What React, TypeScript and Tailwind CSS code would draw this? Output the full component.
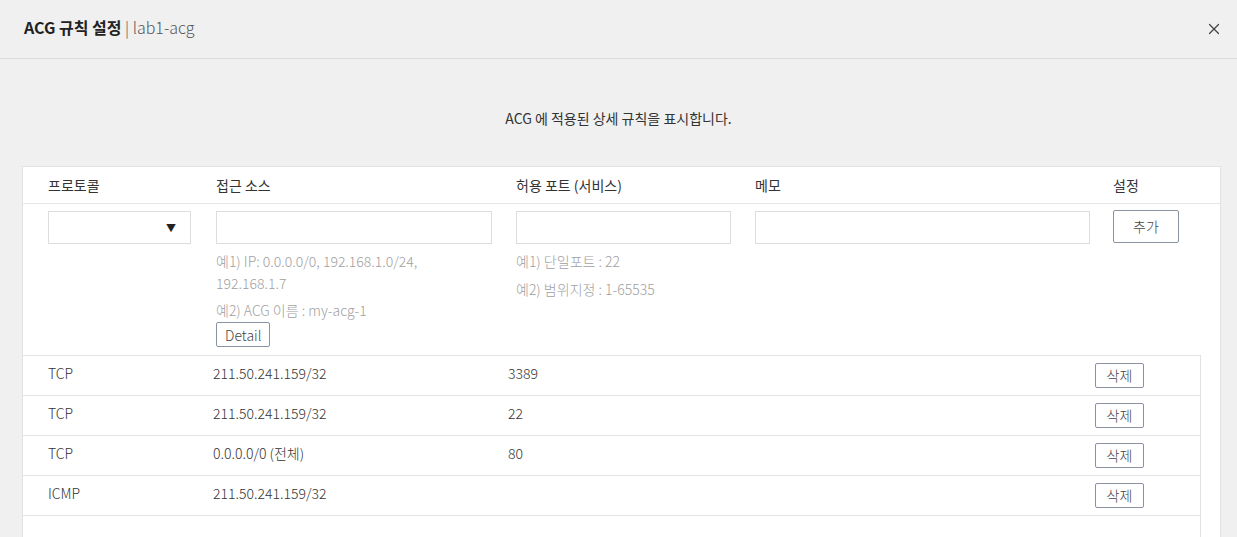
import { X } from 'lucide-react';

const rules = [
  { protocol: 'TCP', source: '211.50.241.159/32', port: '3389' },
  { protocol: 'TCP', source: '211.50.241.159/32', port: '22' },
  { protocol: 'TCP', source: '0.0.0.0/0 (전체)', port: '80' },
  { protocol: 'ICMP', source: '211.50.241.159/32', port: '' },
];

export default function App() {
  return (
    <div
      className="h-[537px] overflow-hidden bg-[#f0f0f0] text-[14px] text-[#333] font-light"
      style={{ fontFamily: '"Noto Sans CJK KR", "Noto Sans", sans-serif' }}
    >
      {/* Header */}
      <header className="h-[59px] pl-6 pr-[14px] flex items-center justify-between border-b border-[#dcdcdc]">
        <h1 className="text-[16px] -mt-[4px]">
          <span className="font-semibold text-[#222]">ACG 규칙 설정</span>
          <span className="text-[#555]"> | lab1-acg</span>
        </h1>
        <button className="text-[#444]">
          <X size={18} strokeWidth={1.6} />
        </button>
      </header>

      <p className="text-center mt-[49px] mb-[38px] leading-[20px] font-normal">
        ACG 에 적용된 상세 규칙을 표시합니다.
      </p>

      {/* Card */}
      <div className="mx-[22px] mr-[16px] bg-white border border-[#e2e2e2] pr-[19px]">
        <div className="-mr-[19px] grid grid-cols-[168px_300px_239px_358px_1fr] pl-[25px] h-[37px] items-center border-b border-[#e6e6e6] font-normal">
          <span>프로토콜</span>
          <span>접근 소스</span>
          <span>허용 포트 (서비스)</span>
          <span>메모</span>
          <span>설정</span>
        </div>

        <div className="-mr-[19px] grid grid-cols-[168px_300px_239px_358px_1fr] pl-[25px] pt-[7px] h-[151px] text-[#a0a0a0]">
          <div className="pr-[25px]">
            <div className="h-[33px] border border-[#ddd] flex items-center justify-end pr-[14px]">
              <span className="text-[10px] text-[#222]">▼</span>
            </div>
          </div>
          <div className="pr-[24px]">
            <div className="h-[33px] border border-[#ddd]" />
            <p className="mt-[6px] leading-[22px]">
              예1) IP: 0.0.0.0/0, 192.168.1.0/24,
              <br />
              192.168.1.7
            </p>
            <p className="mt-[5px] leading-[22px]">예2) ACG 이름 : my-acg-1</p>
            <button className="mt-[1px] h-[25px] px-[8px] border border-[#8a94a0] rounded-[2px] text-[#444] leading-[22px]">
              Detail
            </button>
          </div>
          <div className="pr-[24px]">
            <div className="h-[33px] border border-[#ddd]" />
            <p className="mt-[6px] leading-[22px]">예1) 단일포트 : 22</p>
            <p className="mt-[6px] leading-[22px]">예2) 범위지정 : 1-65535</p>
          </div>
          <div className="pr-[23px]">
            <div className="h-[33px] border border-[#ddd]" />
          </div>
          <div>
            <button className="h-[33px] w-[66px] border border-[#8a94a0] rounded-[2px] text-[#444] -mt-[1px]">추가</button>
          </div>
        </div>

        <div className="border-t border-r border-[#e2e2e2] h-[200px]">
          {rules.map((r, i) => (
            <div
              key={i}
              className="grid grid-cols-[165px_295px_1fr_auto] pl-[25px] pr-[56px] h-[40px] items-center border-b border-[#e2e2e2]"
            >
              <span className="-mt-[5px]">{r.protocol}</span>
              <span className="-mt-[5px]">{r.source}</span>
              <span className="-mt-[5px]">{r.port}</span>
              <button className="h-[25px] w-[49px] border border-[#8a94a0] rounded-[2px] text-[#444] leading-[22px] -mt-[1px]">
                삭제
              </button>
            </div>
          ))}
        </div>
      </div>
    </div>
  );
}
